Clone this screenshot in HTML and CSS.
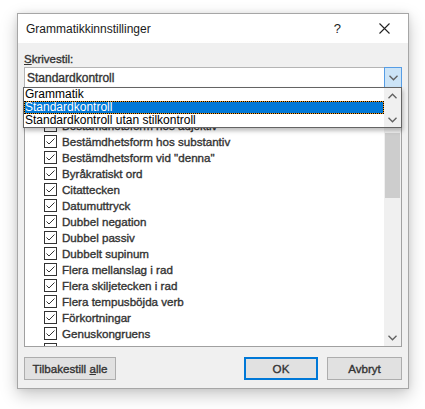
FILE: index.html
```html
<!DOCTYPE html>
<html>
<head>
<meta charset="utf-8">
<link rel="stylesheet" href="styles.css">
</head>
<body>
<div class="dialog">
  <div class="titlebar">
    <span class="title">Grammatikkinnstillinger</span>
    <span class="help">?</span>
    <svg class="close" width="11" height="11" viewBox="0 0 11 11"><path d="M0.5 0.5L10.5 10.5M10.5 0.5L0.5 10.5" stroke="#222" stroke-width="1.1" fill="none"/></svg>
  </div>
  <div class="body">
    <div class="label"><u>S</u>krivestil:</div>
    <div class="combo">
      <span class="combo-text">Standardkontroll</span>
      <span class="combo-btn"><svg width="9" height="6" viewBox="0 0 9 6"><path d="M0.5 0.8L4.5 4.8L8.5 0.8" stroke="#606060" stroke-width="1.3" fill="none"/></svg></span>
    </div>
    <div class="listbox">
      <div class="items">
        <div class="item"><svg class="cb" width="13" height="13"><rect x="0.5" y="0.5" width="12" height="12" fill="#fff" stroke="#333"/><path d="M2.5 6.5L5 9L10.5 3.5" fill="none" stroke="#333"/></svg>Bestämdhetsform hos adjektiv</div>
        <div class="item"><svg class="cb" width="13" height="13"><rect x="0.5" y="0.5" width="12" height="12" fill="#fff" stroke="#333"/><path d="M2.5 6.5L5 9L10.5 3.5" fill="none" stroke="#333"/></svg>Bestämdhetsform hos substantiv</div>
        <div class="item"><svg class="cb" width="13" height="13"><rect x="0.5" y="0.5" width="12" height="12" fill="#fff" stroke="#333"/><path d="M2.5 6.5L5 9L10.5 3.5" fill="none" stroke="#333"/></svg>Bestämdhetsform vid "denna"</div>
        <div class="item"><svg class="cb" width="13" height="13"><rect x="0.5" y="0.5" width="12" height="12" fill="#fff" stroke="#333"/><path d="M2.5 6.5L5 9L10.5 3.5" fill="none" stroke="#333"/></svg>Byråkratiskt ord</div>
        <div class="item"><svg class="cb" width="13" height="13"><rect x="0.5" y="0.5" width="12" height="12" fill="#fff" stroke="#333"/><path d="M2.5 6.5L5 9L10.5 3.5" fill="none" stroke="#333"/></svg>Citattecken</div>
        <div class="item"><svg class="cb" width="13" height="13"><rect x="0.5" y="0.5" width="12" height="12" fill="#fff" stroke="#333"/><path d="M2.5 6.5L5 9L10.5 3.5" fill="none" stroke="#333"/></svg>Datumuttryck</div>
        <div class="item"><svg class="cb" width="13" height="13"><rect x="0.5" y="0.5" width="12" height="12" fill="#fff" stroke="#333"/><path d="M2.5 6.5L5 9L10.5 3.5" fill="none" stroke="#333"/></svg>Dubbel negation</div>
        <div class="item"><svg class="cb" width="13" height="13"><rect x="0.5" y="0.5" width="12" height="12" fill="#fff" stroke="#333"/><path d="M2.5 6.5L5 9L10.5 3.5" fill="none" stroke="#333"/></svg>Dubbel passiv</div>
        <div class="item"><svg class="cb" width="13" height="13"><rect x="0.5" y="0.5" width="12" height="12" fill="#fff" stroke="#333"/><path d="M2.5 6.5L5 9L10.5 3.5" fill="none" stroke="#333"/></svg>Dubbelt supinum</div>
        <div class="item"><svg class="cb" width="13" height="13"><rect x="0.5" y="0.5" width="12" height="12" fill="#fff" stroke="#333"/><path d="M2.5 6.5L5 9L10.5 3.5" fill="none" stroke="#333"/></svg>Flera mellanslag i rad</div>
        <div class="item"><svg class="cb" width="13" height="13"><rect x="0.5" y="0.5" width="12" height="12" fill="#fff" stroke="#333"/><path d="M2.5 6.5L5 9L10.5 3.5" fill="none" stroke="#333"/></svg>Flera skiljetecken i rad</div>
        <div class="item"><svg class="cb" width="13" height="13"><rect x="0.5" y="0.5" width="12" height="12" fill="#fff" stroke="#333"/><path d="M2.5 6.5L5 9L10.5 3.5" fill="none" stroke="#333"/></svg>Flera tempusböjda verb</div>
        <div class="item"><svg class="cb" width="13" height="13"><rect x="0.5" y="0.5" width="12" height="12" fill="#fff" stroke="#333"/><path d="M2.5 6.5L5 9L10.5 3.5" fill="none" stroke="#333"/></svg>Förkortningar</div>
        <div class="item"><svg class="cb" width="13" height="13"><rect x="0.5" y="0.5" width="12" height="12" fill="#fff" stroke="#333"/><path d="M2.5 6.5L5 9L10.5 3.5" fill="none" stroke="#333"/></svg>Genuskongruens</div>
        <div class="item"><svg class="cb" width="13" height="13"><rect x="0.5" y="0.5" width="12" height="12" fill="#fff" stroke="#333"/><path d="M2.5 6.5L5 9L10.5 3.5" fill="none" stroke="#333"/></svg></div>
      </div>
      <div class="vscroll">
        <div class="track"><div class="thumb"></div></div>
        <div class="arrow"><svg width="9" height="6" viewBox="0 0 9 6"><path d="M0.5 0.8L4.5 4.8L8.5 0.8" stroke="#606060" stroke-width="1.3" fill="none"/></svg></div>
      </div>
    </div>
    <div class="buttons">
      <div class="btn reset"><span>Tilbakestill <u>a</u>lle</span></div>
      <div class="spacer"></div>
      <div class="btn ok">OK</div>
      <div class="btn cancel">Avbryt</div>
    </div>
  </div>
  <div class="dropdown">
    <div class="dd-items">
      <div class="dd-item">Grammatik</div>
      <div class="dd-item selected"><div class="sel-inner">Standardkontroll</div></div>
      <div class="dd-item">Standardkontroll utan stilkontroll</div>
    </div>
    <div class="dd-scroll">
      <svg width="9" height="6" viewBox="0 0 9 6"><path d="M0.5 5.2L4.5 1.2L8.5 5.2" stroke="#606060" stroke-width="1.3" fill="none"/></svg>
      <svg width="9" height="6" viewBox="0 0 9 6"><path d="M0.5 0.8L4.5 4.8L8.5 0.8" stroke="#606060" stroke-width="1.3" fill="none"/></svg>
    </div>
  </div>
</div>
</body>
</html>
```
FILE: styles.css
```css
* { box-sizing: border-box; }
html, body { margin: 0; padding: 0; background: #fff; }
body {
  font-family: "Liberation Sans", Arial, sans-serif;
  font-size: 12px;
  color: #000;
  width: 425px;
  height: 409px;
  overflow: hidden;
}
.dialog {
  position: relative;
  margin: 13px 0 0 17px;
  width: 392px;
  height: 376px;
  border: 1px solid #a6a6a6;
  background: #f0f0f0;
  box-shadow: 0 6px 16px rgba(0,0,0,0.22), 0 0 6px rgba(0,0,0,0.08);
  display: flex;
  flex-direction: column;
}
.titlebar {
  height: 29px;
  background: #fff;
  display: flex;
  align-items: center;
  padding-left: 8px;
}
.title { font-size: 12px; color: #1a1a1a; flex: 1; padding-top: 1px; }
.help { font-size: 13px; color: #222; margin-right: 38px; }
.close { margin-right: 18px; }
.body {
  flex: 1;
  display: flex;
  flex-direction: column;
  padding: 9px 6px 8px 6px;
}
.label {
  height: 15px;
  line-height: 15px;
  font-size: 11.5px;
  color: #333;
  -webkit-text-stroke: 0.35px #333;
}
.label u { text-decoration-thickness: 1px; }
.combo {
  height: 21px;
  background: #fff;
  border: 1px solid #b4b4b4;
  display: flex;
  align-items: center;
}
.combo-text {
  flex: 1;
  padding-left: 2px;
  font-size: 12px;
  color: #333;
  -webkit-text-stroke: 0.35px #333;
}
.combo-btn {
  width: 18px;
  height: 21px;
  margin: -1px -1px -1px 0;
  background: #cce4f7;
  border: 1px solid #569de5;
  display: flex;
  align-items: center;
  justify-content: center;
}
.listbox {
  margin-top: 8px;
  height: 251px;
  background: #fff;
  border: 1px solid #a0a0a0;
  display: flex;
  overflow: hidden;
}
.items {
  flex: 1;
  padding-top: 20px;
  padding-left: 19px;
}
.item {
  height: 16px;
  display: flex;
  align-items: center;
  font-size: 11.6px;
  color: #333;
  -webkit-text-stroke: 0.35px #333;
  white-space: nowrap;
}
.cb { margin-right: 5px; flex: none; }
.vscroll {
  width: 17px;
  background: #f0f0f0;
  display: flex;
  flex-direction: column;
}
.track { flex: 1; padding-top: 36px; }
.thumb {
  margin: 0 1px;
  height: 65px;
  background: #cdcdcd;
}
.arrow {
  height: 17px;
  display: flex;
  align-items: center;
  justify-content: center;
}
.buttons {
  margin-top: 10px;
  display: flex;
  height: 23px;
}
.spacer { flex: 1; }
.btn {
  height: 23px;
  background: #e1e1e1;
  border: 1px solid #adadad;
  display: flex;
  align-items: center;
  justify-content: center;
  font-size: 11.6px;
  color: #333;
  -webkit-text-stroke: 0.35px #333;
  white-space: nowrap;
}
.reset { width: 92px; }
.ok { width: 74px; border: 2px solid #0078d7; }
.cancel { width: 75px; margin-left: 9px; }
.dropdown {
  position: absolute;
  left: 5px;
  top: 73px;
  width: 379px;
  height: 41px;
  background: #fff;
  border: 1px solid #646464;
  display: flex;
  box-shadow: 1px 3px 4px rgba(0,0,0,0.25);
}
.dd-items { flex: 1; }
.dd-item {
  height: 13px;
  line-height: 13px;
  padding-left: 1px;
  font-size: 12px;
  color: #000;
  white-space: nowrap;
}
.dd-item.selected {
  padding: 1px;
  line-height: 11px;
  background: #f59b1a;
  outline: 1px dotted #000;
  outline-offset: -1px;
}
.sel-inner {
  height: 11px;
  line-height: 11px;
  background: #0078d7;
  color: #fff;
}
.dd-scroll {
  width: 17px;
  background: #f0f0f0;
  display: flex;
  flex-direction: column;
  align-items: center;
  justify-content: space-between;
  padding: 5px 0 4px;
}
```
